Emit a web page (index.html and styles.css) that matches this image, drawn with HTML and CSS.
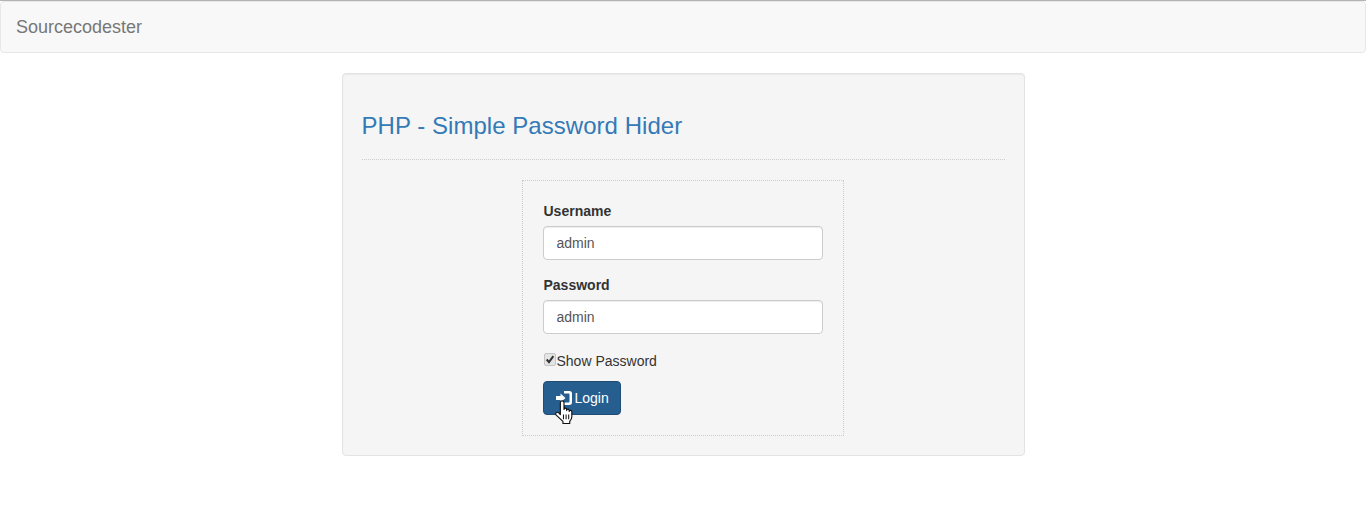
FILE: index.html
```html
<!DOCTYPE html>
<html lang="en">
<head>
<meta charset="utf-8">
<title>PHP - Simple Password Hider</title>
<link rel="stylesheet" href="styles.css">
</head>
<body>
<nav class="navbar"><a class="brand" href="#">Sourcecodester</a></nav>
<main class="well">
  <h3 class="title">PHP - Simple Password Hider</h3>
  <hr class="rule">
  <form class="login">
    <div class="group">
      <label class="field-label" for="u">Username</label>
      <input class="input" id="u" type="text" value="admin">
    </div>
    <div class="group">
      <label class="field-label" for="p">Password</label>
      <input class="input" id="p" type="text" value="admin">
    </div>
    <label class="show"><input class="check" type="checkbox" checked>Show Password</label>
    <button class="btn" type="button">
      <svg class="login-icon" viewBox="0 0 16 14" width="16" height="14" aria-hidden="true"><path d="M0 5h4.500V2.500L9.500 7l-5 4.500V9H0z"/><path d="M8 0h5.300A2.700 2.700 0 0 1 16 2.700v8.600a2.700 2.700 0 0 1-2.700 2.700H8v-2.500h4.500c.6 0 1-.4 1-1V3.500c0-.6-.4-1-1-1H8z"/></svg>Login
      <svg class="cursor" viewBox="0 0 17 23" width="18" height="24" aria-hidden="true"><path d="M5 2.500c0-2.300 3.500-2.300 3.500 0V9c0-1.600 2.500-1.600 2.500 0v1c0-1.600 2.500-1.600 2.500 0v1c0-1.500 2.500-1.500 2.500.3V16c0 2.200-1 3.300-2 4.500v2H7.500v-2L1 14.500c-1.300-2 1-3.600 2.500-2.200L5 14z" fill="#fff" stroke="#111" stroke-width="1.100" stroke-linejoin="round"/><path d="M8 14v4.500M10.500 14v4.500M13 14v4.500" stroke="#111" stroke-width="1" fill="none"/></svg>
    </button>
  </form>
</main>
</body>
</html>
```
FILE: styles.css
```css
* { box-sizing: border-box; }
html, body { margin: 0; padding: 0; }
body {
  background: #fff;
  color: #333;
  font-family: "Liberation Sans", Arial, sans-serif;
  font-size: 14px;
  line-height: 20px;
  border-top: 1px solid #b4b4b4;
}
.navbar {
  height: 52px;
  background: #f8f8f8;
  border: 1px solid #e7e7e7;
  border-radius: 4px;
  padding: 15px;
  margin-bottom: 20px;
}
.brand {
  color: #777;
  font-size: 18px;
  line-height: 20px;
  text-decoration: none;
  display: block;
}
.well {
  width: 683px;
  height: 383px;
  margin: 0 auto;
  background: #f5f5f5;
  border: 1px solid #e3e3e3;
  border-radius: 4px;
  padding: 19px;
  box-shadow: inset 0 1px 1px rgba(0,0,0,.05);
}
.title {
  margin: 20px 0 0;
  color: #337ab7;
  font-size: 24px;
  font-weight: 500;
  line-height: 26.4px;
  letter-spacing: .04px;
}
.rule {
  margin: 20px 0;
  height: 0;
  border: 0;
  border-top: 1px dotted #ccc;
}
.login {
  width: 322px;
  margin-left: 160px;
  border: 1px dotted #ccc;
  padding: 20px;
}
.group { margin-bottom: 15px; }
.field-label {
  display: block;
  font-weight: 700;
  margin-bottom: 5px;
  padding-left: 1px;
}
.input {
  display: block;
  width: 100%;
  height: 34px;
  padding: 6px 13px;
  font: 14px/20px "Liberation Sans", Arial, sans-serif;
  color: #555;
  background: #fff;
  border: 1px solid #ccc;
  border-radius: 4px;
  box-shadow: inset 0 1px 1px rgba(0,0,0,.075);
}
.show {
  display: flex;
  align-items: flex-start;
  margin: 17px 0 10px;
  height: 20px;
  white-space: nowrap;
}
.check {
  appearance: none;
  flex: none;
  width: 12px;
  height: 13px;
  margin: 2px 1px 0 1px;
  background: #e4e4e4 url("data:image/svg+xml,%3Csvg xmlns='http://www.w3.org/2000/svg' viewBox='0 0 12 13'%3E%3Cpath d='M2 6.500l2.800 3.200L10 2.500' fill='none' stroke='%23333' stroke-width='2.400'/%3E%3C/svg%3E") center no-repeat;
  border: 1px solid #c4c4c4;
  border-radius: 2px;
}
.btn {
  position: relative;
  display: flex;
  align-items: center;
  height: 34px;
  width: 78px;
  padding: 6px 12px;
  background: #265f8f;
  color: #fff;
  border: 1px solid #204d74;
  border-radius: 4px;
  font: 14px/20px "Liberation Sans", Arial, sans-serif;
}
.login-icon { fill: #fff; margin-right: 3px; flex: none; }
.cursor { position: absolute; left: 11px; top: 18px; }
```
